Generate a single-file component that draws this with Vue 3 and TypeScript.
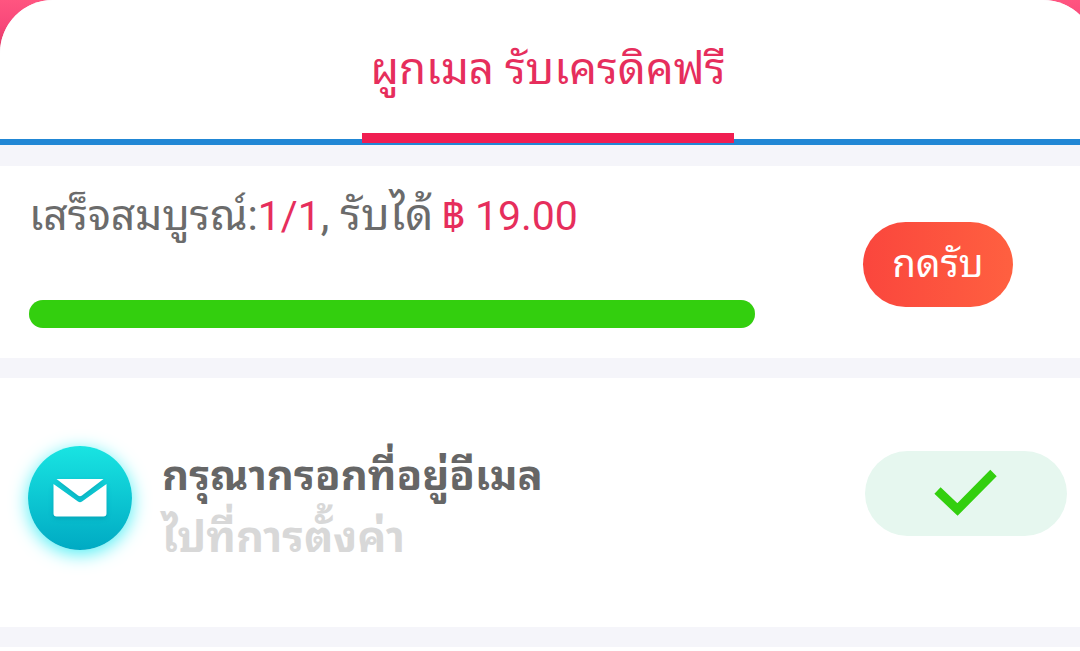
<script setup lang="ts">
interface Progress {
  done: number
  total: number
  reward: string
}

const progress: Progress = { done: 1, total: 1, reward: '19.00' }
const percent = `${(progress.done / progress.total) * 100}%`
</script>

<template>
  <main class="page">
    <div class="sheet">
      <header class="tabs">
        <div class="tab">ผูกเมล รับเครดิคฟรี</div>
      </header>

      <section class="card reward">
        <div class="reward-info">
          <p class="summary">
            <span class="done-label">เสร็จสมบูรณ์:</span><span class="accent count">{{ progress.done }}/{{ progress.total }}</span><span class="get-label">, รับได้</span><span class="accent amount">฿ {{ progress.reward }}</span>
          </p>
          <div class="track"><div class="fill" :style="{ width: percent }"></div></div>
        </div>
        <button class="claim" type="button">กดรับ</button>
      </section>

      <section class="card task">
        <div class="badge">
          <svg width="58" height="44" viewBox="0 0 58 44">
            <path d="M2.500 8 27 25.500q2 1.500 4 0L55.500 8V37.500q0 3-3 3H5.500q-3 0-3-3z" fill="#fff" />
            <path d="M5.500 3H52.500L31 19.500q-2 1.500-4 0z" fill="#fff" />
          </svg>
        </div>
        <div class="task-text">
          <h2 class="task-title">กรุณากรอกที่อยู่อีเมล</h2>
          <p class="task-sub">ไปที่การตั้งค่า</p>
        </div>
        <div class="status">
          <svg width="66" height="50" viewBox="0 0 66 50">
            <path d="M4.500 21.500 24.500 40.500 60.500 4" fill="none" stroke="#33cf0e" stroke-width="9" />
          </svg>
        </div>
      </section>
      <div class="card rest"></div>
    </div>
  </main>
</template>

<style>
body {
  margin: 0;
  overflow: hidden;
}
</style>

<style scoped>
.page {
  width: 1080px;
  height: 651px;
  overflow: hidden;
  background: linear-gradient(#ff5580 0, #f8487a 25px, #db3460 54px);
  font-family: Roboto, "Noto Sans Thai Looped", Loma, sans-serif;
}
.sheet {
  width: 1096px;
  height: 651px;
  display: flex;
  flex-direction: column;
  gap: 20px;
  background: #f5f5fa;
  border-radius: 53px 53px 0 0;
  overflow: hidden;
}
.tabs {
  height: 145px;
  margin-bottom: 1px;
  display: flex;
  justify-content: center;
  background: linear-gradient(#fff 139.500px, #2187d5 139.500px);
}
.tab {
  box-sizing: border-box;
  width: 372px;
  height: 143px;
  border-bottom: 10px solid #f01e51;
  text-align: center;
  color: #e62e5c;
  font-size: 44px;
  line-height: 138px;
  white-space: nowrap;
}
.card {
  flex: none;
  background: #fff;
}
.reward {
  display: flex;
  height: 192px;
}
.reward-info {
  width: 726px;
  margin-left: 29px;
}
.summary {
  display: flex;
  align-items: baseline;
  margin: 18px 0 0;
  height: 62px;
  line-height: 62px;
  font-size: 41px;
  color: #6b6b6b;
  white-space: pre;
}
.done-label {
  font-size: 42.600px;
}
.get-label {
  font-size: 44px;
}
.accent {
  color: #e62e5c;
}
.amount {
  margin-left: 8px;
}
.track {
  margin-top: 54px;
  height: 28px;
  border-radius: 14px;
  background: #e5e5e5;
}
.fill {
  height: 100%;
  border-radius: inherit;
  background: #33cf0e;
}
.claim {
  width: 150px;
  height: 85px;
  margin: 56px 0 0 108px;
  padding: 0 0 10px;
  border: 0;
  border-radius: 43px;
  background: linear-gradient(90deg, #fa463d, #ff6040);
  color: #fff;
  font: inherit;
  font-size: 38.500px;
}
.task {
  display: flex;
  height: 249px;
}
.badge {
  width: 104px;
  height: 104px;
  margin: 68px 0 0 28px;
  border-radius: 50%;
  display: flex;
  align-items: center;
  justify-content: center;
  background: linear-gradient(#19e4e2, #00aac3);
  box-shadow: 0 4px 18px #4ceff5;
}
.badge svg {
  filter: drop-shadow(0 2px 2px #007d9560);
}
.task-text {
  width: 703px;
  margin: 67px 0 0 30px;
  font-weight: 700;
  white-space: nowrap;
}
.task-title,
.task-sub {
  margin: 0;
  height: 62px;
  line-height: 62px;
}
.task-title {
  color: #666;
  font-size: 41.800px;
}
.task-sub {
  color: #d8d8d8;
  font-size: 43.300px;
}
.status {
  width: 202px;
  height: 85px;
  margin-top: 73px;
  border-radius: 43px;
  display: flex;
  align-items: center;
  justify-content: center;
  background: #e6f7ef;
}
.rest {
  height: 4px;
}
</style>
